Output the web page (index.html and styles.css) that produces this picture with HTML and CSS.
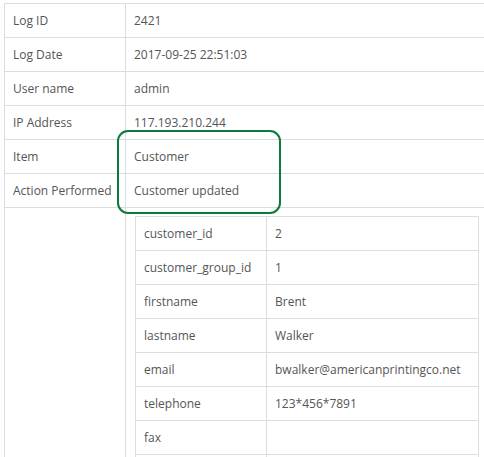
FILE: index.html
```html
<!DOCTYPE html>
<html>
<head>
<meta charset="utf-8">
<link rel="stylesheet" href="styles.css">
</head>
<body>
<div class="page">
  <table class="log">
    <tr><td class="k">Log ID</td><td>2421</td></tr>
    <tr><td class="k">Log Date</td><td>2017-09-25 22:51:03</td></tr>
    <tr><td class="k">User name</td><td>admin</td></tr>
    <tr><td class="k">IP Address</td><td>117.193.210.244</td></tr>
    <tr><td class="k">Item</td><td>Customer</td></tr>
    <tr><td class="k">Action Performed</td><td>Customer updated</td></tr>
    <tr>
      <td class="k"></td>
      <td class="holder">
        <table class="data">
          <tr><td class="dk">customer_id</td><td>2</td></tr>
          <tr><td class="dk">customer_group_id</td><td>1</td></tr>
          <tr><td class="dk">firstname</td><td>Brent</td></tr>
          <tr><td class="dk">lastname</td><td>Walker</td></tr>
          <tr><td class="dk">email</td><td>bwalker@americanprintingco.net</td></tr>
          <tr><td class="dk">telephone</td><td>123*456*7891</td></tr>
          <tr><td class="dk">fax</td><td></td></tr>
          <tr><td class="dk">&nbsp;</td><td></td></tr>
        </table>
      </td>
    </tr>
  </table>
  <div class="highlight"></div>
</div>
</body>
</html>
```
FILE: styles.css
```css
html, body {
  margin: 0;
  padding: 0;
  background: #fff;
  overflow: hidden;
}
.page {
  position: relative;
  width: 500px;
  padding: 3px 0 0 4px;
  font-family: "Open Sans", "Liberation Sans", sans-serif;
  font-size: 12px;
  color: #555;
}
table {
  border-collapse: collapse;
}
td {
  border: 1px solid #ddd;
  padding: 8px 8px;
  line-height: 17px;
  text-align: left;
  vertical-align: top;
}
.log {
  width: 488px;
}
.log .k {
  width: 104px;
}
.holder {
  padding: 8px 8px 0 9px;
}
.data {
  width: 344px;
}
.data .dk {
  width: 114px;
}
.highlight {
  position: absolute;
  left: 117px;
  top: 130px;
  width: 160px;
  height: 80px;
  border: 2px solid #0b7a3c;
  border-radius: 11px;
}
```
